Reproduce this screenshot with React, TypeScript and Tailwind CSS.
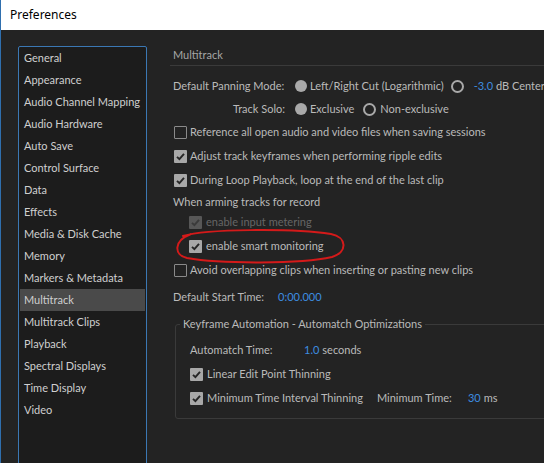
import { FC } from "react";

const SECTIONS = [
  "General",
  "Appearance",
  "Audio Channel Mapping",
  "Audio Hardware",
  "Auto Save",
  "Control Surface",
  "Data",
  "Effects",
  "Media & Disk Cache",
  "Memory",
  "Markers & Metadata",
  "Multitrack",
  "Multitrack Clips",
  "Playback",
  "Spectral Displays",
  "Time Display",
  "Video",
];

const Check: FC<{ checked?: boolean; disabled?: boolean }> = ({ checked, disabled }) => {
  if (!checked) {
    return <span className="block h-[13px] w-[13px] shrink-0 rounded-[1px] border border-[#8a8a8a]" />;
  }
  return (
    <span
      className={`flex h-[13px] w-[13px] shrink-0 items-center justify-center rounded-[1px] ${
        disabled ? "bg-[#575757]" : "bg-[#a8a8a8]"
      }`}
    >
      <svg width="11" height="11" viewBox="0 0 11 11">
        <polyline
          points="2,5.8 4.4,8.2 9,2.8"
          fill="none"
          stroke={disabled ? "#3a3a3a" : "#262626"}
          strokeWidth="1.9"
        />
      </svg>
    </span>
  );
};

const Radio: FC<{ on?: boolean }> = ({ on }) =>
  on ? (
    <span className="block h-[12px] w-[12px] shrink-0 rounded-full bg-[#a9a9a9]" />
  ) : (
    <span className="block h-[13px] w-[13px] shrink-0 rounded-full border-2 border-[#a9a9a9]" />
  );

const Blue: FC<{ children: string }> = ({ children }) => <span className="text-[#3d8de0]">{children}</span>;

const CheckRow: FC<{ label: string; checked?: boolean; className: string }> = ({ label, checked, className }) => (
  <div className={`flex h-[20px] items-center gap-[3px] pl-[4px] ${className}`}>
    <Check checked={checked} />
    <span>{label}</span>
  </div>
);

export default function App() {
  return (
    <div className="relative h-[463px] w-[544px] overflow-hidden border-l border-[#2f6fae] bg-[#232323] font-[Lato,sans-serif] text-[11px] text-[#bababa]">
      <div className="flex h-[30px] items-center bg-white pl-[9px] font-['Noto_Sans',sans-serif] text-[12px] text-black">
        Preferences
      </div>

      <div className="flex">
        <nav className="ml-[17px] mt-[16px] h-[460px] w-[129px] shrink-0 rounded-[2px] border border-[#3b78b4] bg-[#1c1c1c] px-[1px] text-[#cfcfcf]">
          {SECTIONS.map((s) => (
            <div
              key={s}
              className={`h-[22px] whitespace-nowrap pl-[4px] leading-[22px] ${
                s === "Multitrack" ? "bg-[#4a4a4a]" : ""
              }`}
            >
              {s}
            </div>
          ))}
        </nav>

        <div className="ml-[23px] mt-[16px] w-[400px] shrink-0 whitespace-nowrap">
          <div className="flex h-[20px] items-center border-b border-[#3a3a3a] pl-[3px] text-[#a6a6a6]">Multitrack</div>

          <div className="mt-[10px] flex h-[20px] items-center">
            <span className="w-[115px] shrink-0 pl-[3px]">Default Panning Mode:</span>
            <span className="ml-[10px]">
              <Radio on />
            </span>
            <span className="ml-[3px]">Left/Right Cut (Logarithmic)</span>
            <span className="ml-[7px]">
              <Radio />
            </span>
            <span className="ml-[10px]">
              <Blue>-3.0</Blue> dB Center
            </span>
          </div>

          <div className="mt-[3px] flex h-[20px] items-center">
            <span className="w-[115px] shrink-0 text-right">Track Solo:</span>
            <span className="ml-[10px]">
              <Radio on />
            </span>
            <span className="ml-[3px]">Exclusive</span>
            <span className="ml-[9px]">
              <Radio />
            </span>
            <span className="ml-[4px]">Non-exclusive</span>
          </div>

          <CheckRow className="mt-[3px]" label="Reference all open audio and video files when saving sessions" />
          <CheckRow className="mt-[4px]" checked label="Adjust track keyframes when performing ripple edits" />
          <CheckRow className="mt-[4px]" checked label="During Loop Playback, loop at the end of the last clip" />

          <div className="mt-[2px] flex h-[20px] items-center pl-[3px]">When arming tracks for record</div>

          <div className="flex h-[20px] items-center gap-[4px] pl-[19px] text-[#666666]">
            <Check checked disabled />
            <span>enable input metering</span>
          </div>
          <div className="mt-[4px] flex h-[20px] items-center gap-[4px] pl-[19px]">
            <Check checked />
            <span>enable smart monitoring</span>
          </div>

          <CheckRow className="mt-[4px]" label="Avoid overlapping clips when inserting or pasting new clips" />

          <div className="mt-[7px] flex h-[20px] items-center pl-[3px]">
            <span className="w-[105px] shrink-0">Default Start Time:</span>
            <Blue>0:00.000</Blue>
          </div>

          <fieldset className="ml-[5px] mt-[9px] w-[420px] rounded-[3px] border border-[#3a3a3a] pb-[10px] pl-[14px]">
            <legend className="ml-[-10px] px-[3px] leading-[16px]">Keyframe Automation - Automatch Optimizations</legend>
            <div className="mt-[8px] flex h-[20px] items-center">
              <span className="w-[114px] shrink-0">Automatch Time:</span>
              <Blue>1.0</Blue>
              <span className="ml-[3px]">seconds</span>
            </div>
            <div className="mt-[4px] flex h-[20px] items-center gap-[4px]">
              <Check checked />
              <span>Linear Edit Point Thinning</span>
            </div>
            <div className="mt-[4px] flex h-[20px] items-center">
              <Check checked />
              <span className="ml-[4px]">Minimum Time Interval Thinning</span>
              <span className="ml-[14px] w-[91px] shrink-0">Minimum Time:</span>
              <Blue>30</Blue>
              <span className="ml-[3px]">ms</span>
            </div>
          </fieldset>
        </div>
      </div>

      {/* hand-drawn annotation */}
      <svg className="pointer-events-none absolute inset-0" width="544" height="463" viewBox="0 0 544 463">
        <path
          d="M182 236 C205 229 290 228 330 234 C346 237 347 252 331 257 C300 264 220 264 186 258 C173 255 172 241 190 234"
          fill="none"
          stroke="#d41a1a"
          strokeWidth="2"
          strokeLinecap="round"
        />
      </svg>
    </div>
  );
}
